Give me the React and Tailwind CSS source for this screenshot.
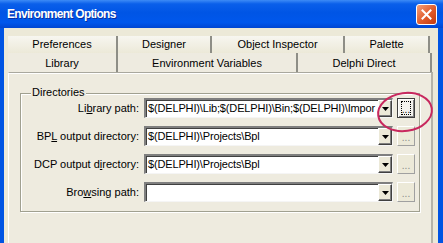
import React from "react";

function Combo({ text }) {
  return (
    <div className="w-[249px] h-[20px] bg-white border-t-2 border-l-2 border-t-[#7F7F7F] border-l-[#7F7F7F] border-b border-r border-b-[#F5F5F5] border-r-[#F5F5F5] flex items-stretch shadow-[inset_1px_1px_0_#404040]">
      <div className="flex-1 overflow-hidden whitespace-nowrap pl-[2px] leading-[17px] text-black tracking-[-0.15px]">{text}</div>
      <div className="w-[14px] bg-[#ECE9D8] border border-t-white border-l-white border-b-[#404040] border-r-[#404040] shadow-[inset_-1px_-1px_0_#808080] flex items-center justify-center">
        <svg width="7" height="4" viewBox="0 0 7 4"><path d="M0 0h7L3.5 4z" fill="#000" /></svg>
      </div>
    </div>
  );
}

function Dots({ focused }) {
  return (
    <div
      className={
        "w-[18px] h-[20px] border flex items-end justify-center pb-[3px] " +
        (focused
          ? "bg-[#F4F3EE] border-[#404040] shadow-[inset_1px_1px_0_#fff,inset_-1px_-1px_0_#808080]"
          : "bg-[#ECE9D8] border-t-white border-l-white border-b-[#A0A0A0] border-r-[#A0A0A0]")
      }
    >
      {focused ? (
        <div className="w-[10px] h-[14px] border border-dotted border-black mb-[-1px] flex items-end justify-center text-[10px] leading-[8px]">...</div>
      ) : (
        <span className="text-[10px] leading-[8px] text-[#8A8A8A]">...</span>
      )}
    </div>
  );
}

function Row({ label, text, focused }) {
  return (
    <div className="flex items-center h-[20px]">
      <div className="w-[118px] text-right whitespace-nowrap text-black">{label}</div>
      <div className="ml-[5px]"><Combo text={text} /></div>
      <div className="ml-[4px]"><Dots focused={focused} /></div>
    </div>
  );
}

export default function App() {
  return (
    <div className="w-[443px] h-[243px] overflow-hidden relative bg-[#0054E3] flex flex-col font-['Liberation_Sans',Arial,sans-serif] text-[11px]">
      {/* title bar */}
      <div className="h-[28px] shrink-0 flex items-center justify-between pl-[7px] pr-[6px] bg-[linear-gradient(to_bottom,#3D8BF6_0%,#0A5FEA_14%,#0055E5_45%,#0057EC_80%,#0046D2_100%)]">
        <span className="text-white font-bold text-[12px] tracking-[-0.7px] [text-shadow:1px_1px_0_#0A2F9E]">Environment Options</span>
        <div className="w-[21px] h-[21px] rounded-[3px] border border-white bg-[linear-gradient(135deg,#F5A07A,#E05A2A_55%,#C23A10)] flex items-center justify-center">
          <svg width="11" height="11" viewBox="0 0 11 11"><path d="M1.5 1.5l8 8M9.5 1.5l-8 8" stroke="#fff" strokeWidth="2" strokeLinecap="square" /></svg>
        </div>
      </div>
      {/* body */}
      <div className="flex-1 ml-[4px] mr-[5px] bg-[#ECE9D8] pt-[8px] pl-[4px] pr-[5px] flex flex-col">
        {/* tab row 1 */}
        <div className="flex h-[17px] text-black">
          {[
            ["Preferences", 110],
            ["Designer", 94],
            ["Object Inspector", 133],
            ["Palette", 85],
          ].map(([t, w]) => (
            <div key={t} style={{ width: w }} className="h-full flex items-center justify-center border-r-2 border-r-[#8E8E86] bg-[linear-gradient(to_bottom,#F7F6F0,#ECE9D8)]">
              {t}
            </div>
          ))}
        </div>
        {/* tab row 2 */}
        <div className="flex h-[19px] text-black">
          {[
            ["Library", 110],
            ["Environment Variables", 180],
            ["Delphi Direct", 134],
          ].map(([t, w]) => (
            <div key={t} style={{ width: w }} className="h-full flex items-start pt-[2px] justify-center border-r-2 border-r-[#8E8E86] bg-[#EEEBE0]">
              {t}
            </div>
          ))}
        </div>
        {/* page */}
        <div className="flex-1 border-t border-t-[#A9A89E] border-l border-l-white border-r-2 border-r-[#B5B3A8] bg-[#EEEBDF] shadow-[inset_0_1px_0_#fff] pt-[20px] pl-[11px] pr-[11px]">
          <div className="relative h-[119px] border border-[#A0A090] shadow-[inset_1px_1px_0_#fff,1px_1px_0_#fff] pt-[4px]">
            <span className="absolute left-[10px] top-[-8px] px-[1px] bg-[#EEEBDF] leading-[13px] text-black">Directories</span>
            <div className="flex flex-col gap-[8px]">
              <Row label={<>Li<u>b</u>rary path:</>} text="$(DELPHI)\Lib;$(DELPHI)\Bin;$(DELPHI)\Impor" focused />
              <Row label={<>BP<u>L</u> output directory:</>} text="$(DELPHI)\Projects\Bpl" />
              <Row label={<>DCP output d<u>i</u>rectory:</>} text="$(DELPHI)\Projects\Bpl" />
              <Row label={<>Bro<u>w</u>sing path:</>} text="" />
            </div>
          </div>
        </div>
      </div>
      {/* annotation ellipse */}
      <svg className="absolute left-0 top-0 pointer-events-none" width="443" height="243">
        <ellipse cx="405" cy="112" rx="27" ry="19" transform="rotate(-8 405 112)" fill="none" stroke="#C8285E" strokeWidth="2" />
      </svg>
    </div>
  );
}
